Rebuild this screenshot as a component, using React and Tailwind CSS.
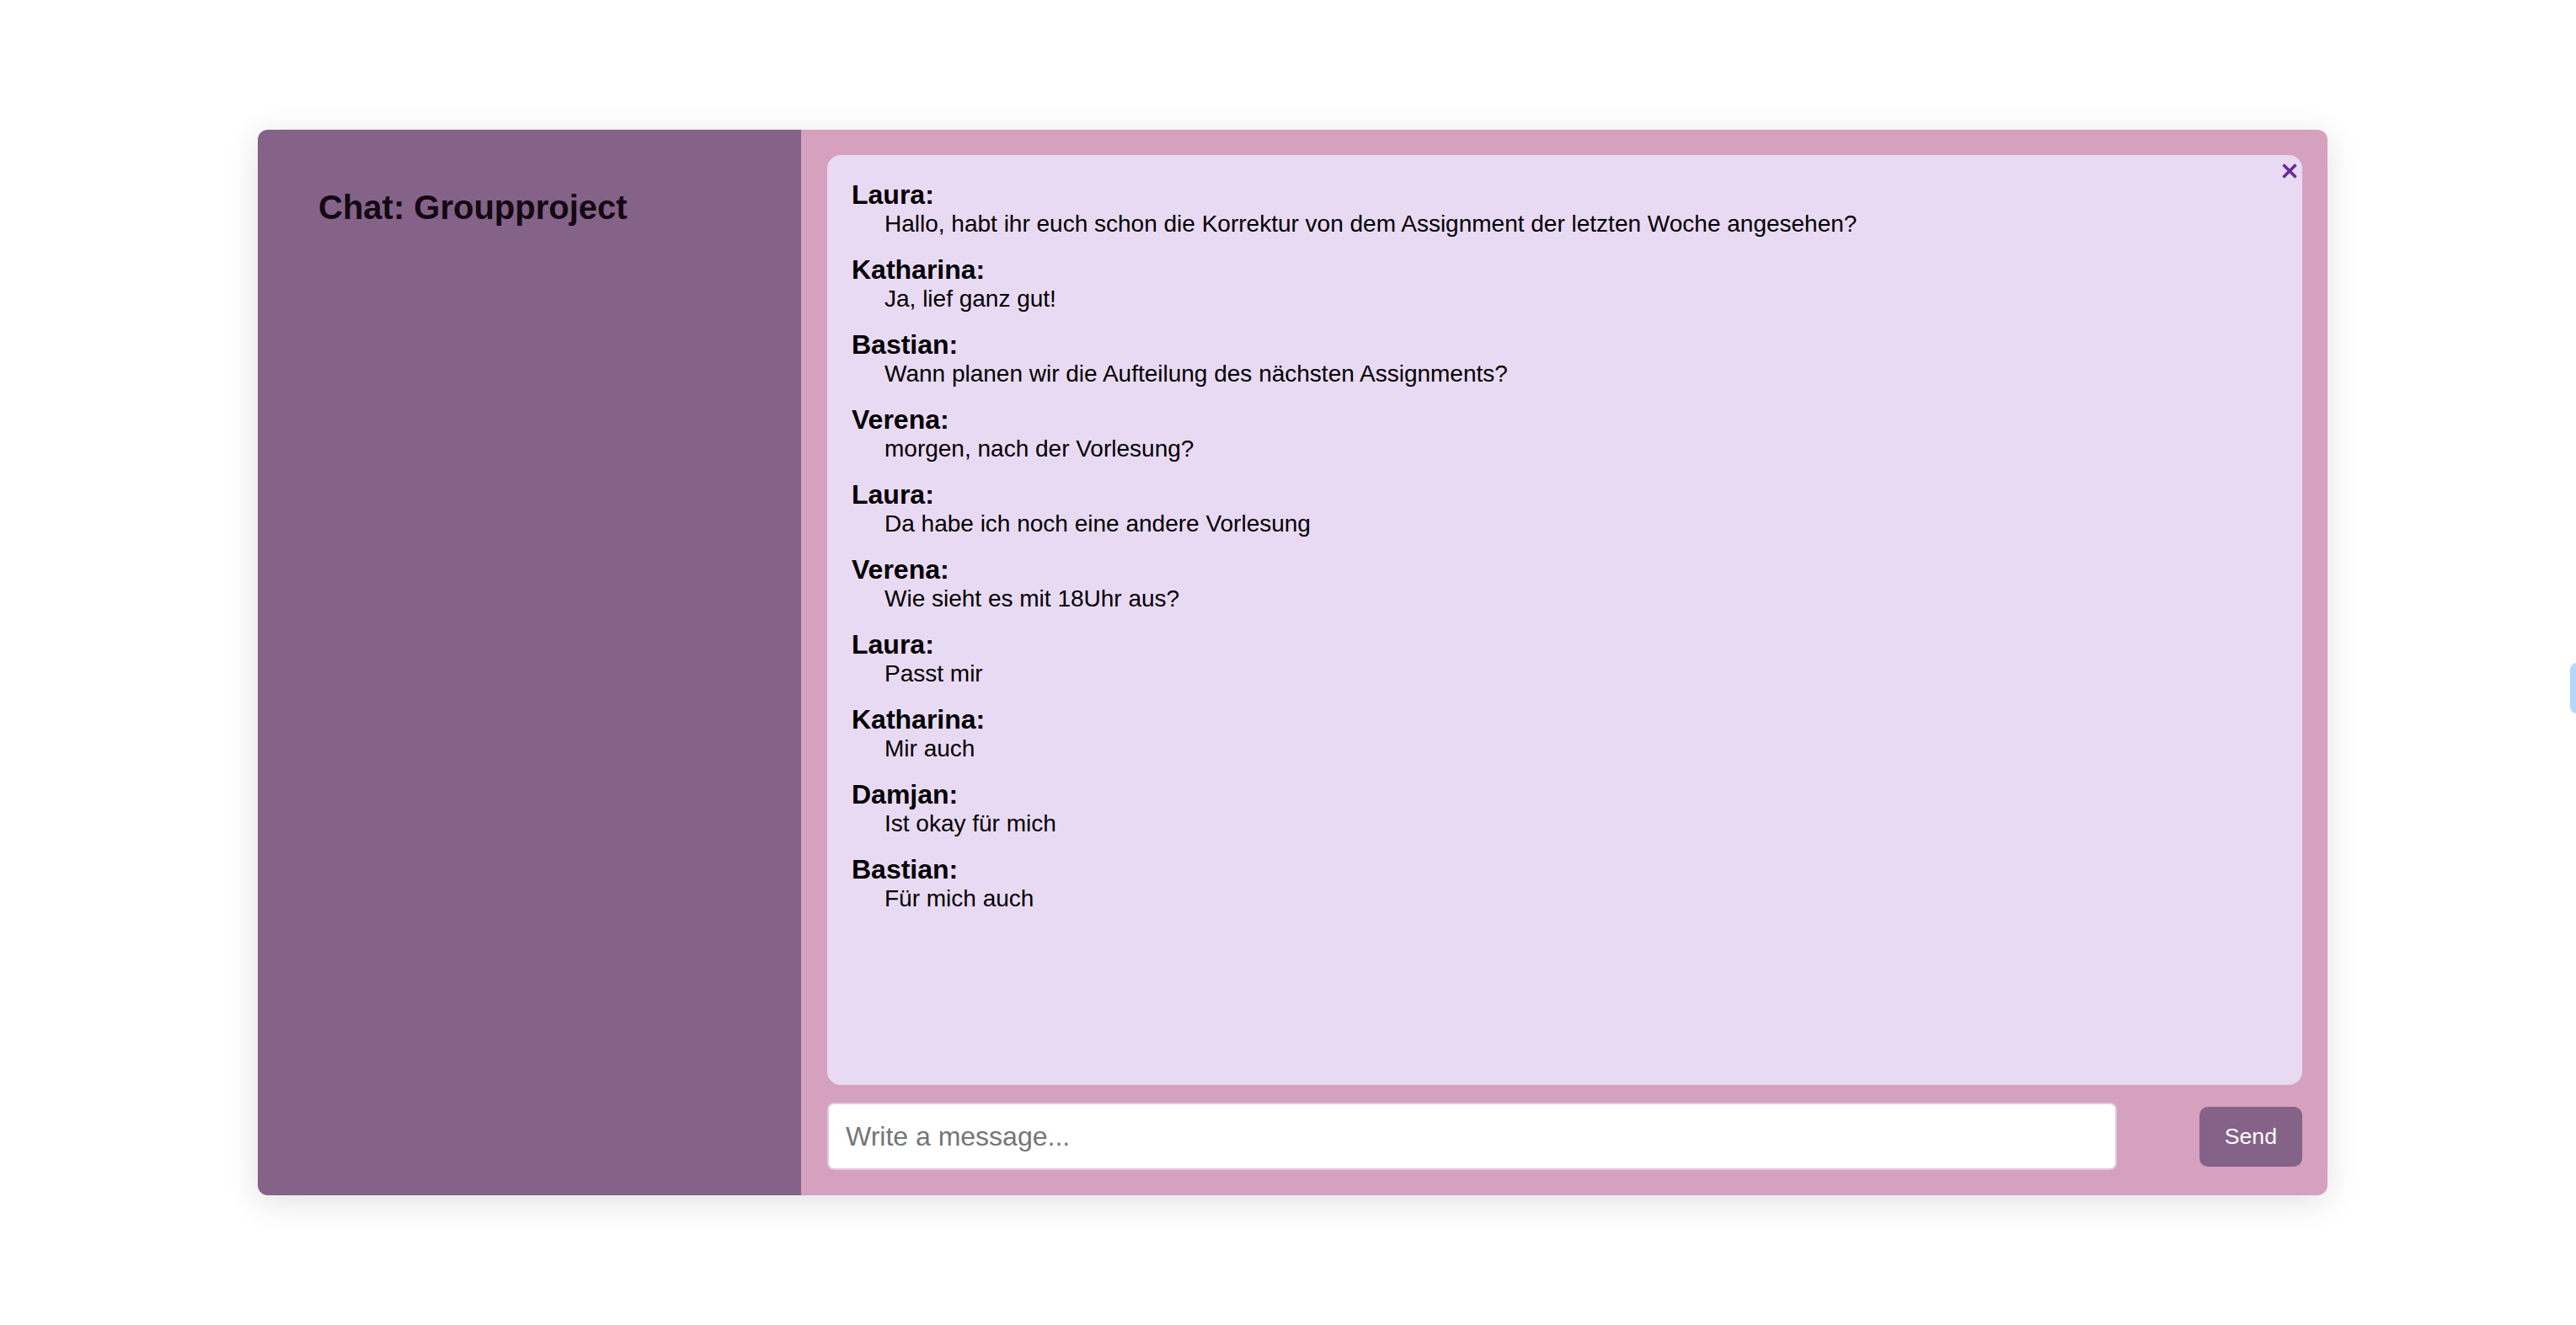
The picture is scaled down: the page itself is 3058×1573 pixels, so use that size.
import React, { useState } from "react";

const messages = [
  { name: "Laura", text: "Hallo, habt ihr euch schon die Korrektur von dem Assignment der letzten Woche angesehen?" },
  { name: "Katharina", text: "Ja, lief ganz gut!" },
  { name: "Bastian", text: "Wann planen wir die Aufteilung des nächsten Assignments?" },
  { name: "Verena", text: "morgen, nach der Vorlesung?" },
  { name: "Laura", text: "Da habe ich noch eine andere Vorlesung" },
  { name: "Verena", text: "Wie sieht es mit 18Uhr aus?" },
  { name: "Laura", text: "Passt mir" },
  { name: "Katharina", text: "Mir auch" },
  { name: "Damjan", text: "Ist okay für mich" },
  { name: "Bastian", text: "Für mich auch" },
];

export default function App() {
  const [draft, setDraft] = useState("");

  return (
    <div className="min-h-screen bg-white font-['Liberation_Sans',Arial,sans-serif] pt-[154px] pl-[306px]">
      <div className="flex w-[2457px] h-[1265px] rounded-[12px] overflow-hidden shadow-[0_8px_40px_rgba(0,0,0,0.12)]">
        {/* Sidebar */}
        <div className="w-[645px] shrink-0 bg-[#856288] pt-[69px] px-[72px]">
          <h2 className="text-[40px] leading-[46px] font-bold text-[#120812]">Chat: Groupproject</h2>
        </div>

        {/* Chat pane */}
        <div className="flex-1 flex flex-col bg-[#d6a1bf] pt-[30px] pb-[30px] pl-[31px] pr-[30px]">
          <div className="relative flex-1 min-h-0 bg-[#e9daf3] rounded-[16px] pt-[29px] px-[29px]">
            <button className="absolute top-[9px] right-[5px] w-[20px] h-[20px]" title="Close">
              <svg viewBox="0 0 20 20" className="w-[20px] h-[20px]">
                <path d="M2.5 2.5 L17.5 17.5 M17.5 2.5 L2.5 17.5" stroke="#6a2a9e" strokeWidth="3.6" strokeLinecap="butt" />
              </svg>
            </button>
            <div className="flex flex-col gap-[20px]">
              {messages.map((m, i) => (
                <div key={i}>
                  <div className="text-[32px] leading-[37px] font-bold text-black">{m.name}:</div>
                  <div className="text-[28px] leading-[32px] text-black ml-[39px]">{m.text}</div>
                </div>
              ))}
            </div>
          </div>

          <div className="flex items-center gap-[98px] mt-[21px]">
            <input
              type="text"
              value={draft}
              onChange={(e) => setDraft(e.target.value)}
              placeholder="Write a message..."
              className="flex-1 h-[80px] px-[20px] text-[32px] bg-white border-2 border-[#e6c6e0] rounded-[8px] outline-none placeholder:text-[#757575]"
            />
            <button className="px-[30px] py-[20px] bg-[#856288] text-white text-[26.67px] rounded-[10px] leading-[31px]">
              Send
            </button>
          </div>
        </div>
      </div>

      {/* extension tab at the right edge */}
      <div className="fixed left-[3051px] top-[787px] w-[20px] h-[60px] rounded-[8px] bg-[#b5d6fe]" />
    </div>
  );
}
